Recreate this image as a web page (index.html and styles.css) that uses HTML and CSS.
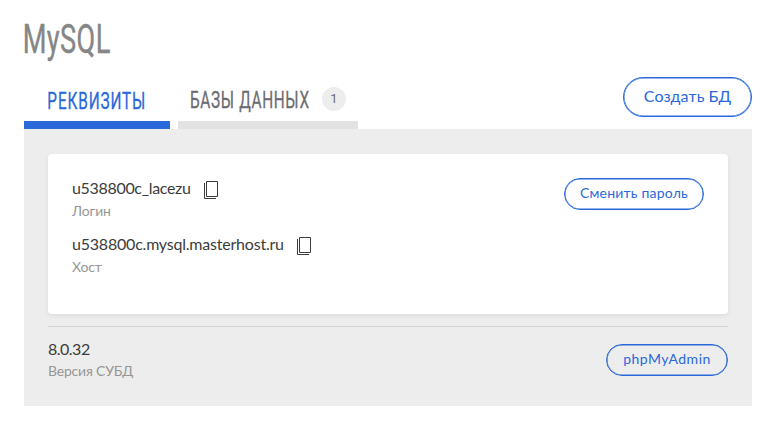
FILE: index.html
```html
<!DOCTYPE html>
<html lang="ru">
<head>
<meta charset="utf-8">
<title>MySQL</title>
<link rel="stylesheet" href="styles.css">
</head>
<body>
<main class="page">
  <h1 class="title"><svg width="88" height="44"><text transform="scale(.68 1)" x="-2" y="36" textLength="129">MySQL</text></svg></h1>
  <header class="bar">
    <nav class="tabs">
      <a class="tab tab-active"><svg width="98" height="28"><text transform="scale(.64 1)" x="-1" y="23" textLength="153">РЕКВИЗИТЫ</text></svg></a>
      <a class="tab"><svg width="120" height="28"><text transform="scale(.64 1)" x="0" y="22" textLength="186">БАЗЫ ДАННЫХ</text></svg><span class="count">1</span></a>
    </nav>
    <button class="btn btn-large">Создать БД</button>
  </header>
  <section class="panel">
    <div class="card">
      <dl class="fields">
        <div class="field">
          <dd class="value"><span class="login">u538800c_lacezu</span><svg class="copy" width="14" height="18" viewBox="0 0 14 18"><path d="M2.5.5h11v15h-11zM.5 2v15.5H12"/></svg></dd>
          <dt class="label">Логин</dt>
        </div>
        <div class="field">
          <dd class="value"><span class="host">u538800c.mysql.masterhost.ru</span><svg class="copy" width="14" height="18" viewBox="0 0 14 18"><path d="M2.5.5h11v15h-11zM.5 2v15.5H12"/></svg></dd>
          <dt class="label">Хост</dt>
        </div>
      </dl>
      <button class="btn btn-password">Сменить пароль</button>
    </div>
    <footer class="footer">
      <dl class="fields">
        <dd class="value version">8.0.32</dd>
        <dt class="label">Версия СУБД</dt>
      </dl>
      <button class="btn btn-admin">phpMyAdmin</button>
    </footer>
  </section>
</main>
</body>
</html>
```
FILE: styles.css
```css
* { box-sizing: border-box; }
body { margin: 0; background: #fff; color: #3c3c3c; font-family: Lato, "Open Sans", sans-serif; }
.page { width: 728px; margin: 0 24px; padding-top: 17px; }
.title { margin: 0; height: 60px; font: 400 40px Roboto, sans-serif; }
.title svg { display: block; fill: #868686; stroke: #868686; stroke-width: .4px; overflow: visible; }
.bar { display: flex; justify-content: space-between; align-items: flex-start; height: 52px; }
.tabs { display: flex; gap: 8px; }
.tab { display: flex; align-items: center; width: 180px; height: 52px; padding: 0 12px 8px; border-bottom: 8px solid #e2e2e2; font: 400 24px Roboto, sans-serif; fill: #6c6c70; stroke: #6c6c70; stroke-width: .3px; }
.tab svg { display: block; flex: none; overflow: visible; margin-top: 10px; }
.tab-active { width: 146px; padding: 0 24px 8px; border-color: #2a68da; fill: #2a68da; stroke: #2a68da; }
.count { width: 24px; height: 24px; margin: 8px 0 0 12px; border-radius: 50%; background: #ededed; color: #6c6c70; font: 13px/24px Roboto, sans-serif; text-align: center; }
.btn { padding: 0 0 3px; border: 1px solid #2a68da; box-shadow: inset 0 0 0 .5px #2a68da; border-radius: 20px; background: transparent; color: #2a68da; font: 14px Lato, "Open Sans", sans-serif; height: 32px; letter-spacing: .2px; white-space: nowrap; }
.btn-large { width: 129px; height: 40px; font-size: 16px; letter-spacing: .1px; }
.btn-password { width: 140px; }
.btn-admin { width: 122px; letter-spacing: .5px; }
.panel { height: 277px; padding: 25px 24px 0; background: #ededed; }
.card { display: flex; justify-content: space-between; align-items: flex-start; height: 160px; padding: 24px; border-radius: 4px; background: #fff; box-shadow: 0 2px 5px rgba(0,0,0,.07); }
.fields { margin: 0; }
.field { height: 56px; }
.value { display: flex; align-items: center; height: 22px; margin: 0; font-size: 16px; line-height: 20px; }
.value span { height: 22px; }
.login { width: 119px; letter-spacing: -.32px; }
.host { width: 212px; letter-spacing: -.21px; }
.version { align-items: flex-start; letter-spacing: -.5px; }
.copy { flex: none; margin-left: 13px; margin-top: 2px; fill: none; stroke: #3c3c3c; }
.label { height: 22px; color: #969696; font-size: 14px; line-height: 22px; letter-spacing: -.15px; }
.footer { display: flex; justify-content: space-between; align-items: flex-start; margin-top: 12px; padding-top: 12px; border-top: 1px solid #d5d5d5; }
.footer .label { line-height: 20px; letter-spacing: -.2px; }
.footer .btn { margin-top: 5px; }
```
